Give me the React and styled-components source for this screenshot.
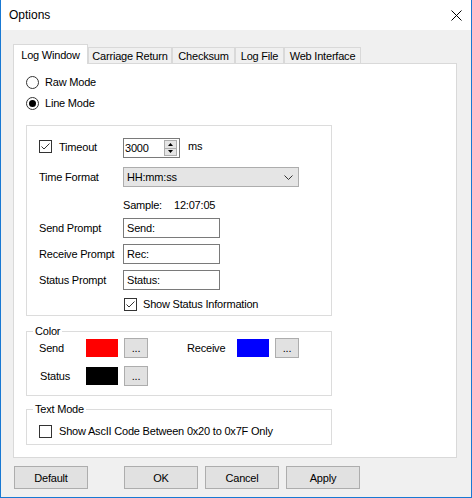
import React from 'react';
import styled, { createGlobalStyle } from 'styled-components';

const Global = createGlobalStyle`
  html, body { margin: 0; padding: 0; background: #f0f0f0; }
  body { font-family: "Liberation Sans", Arial, sans-serif; font-size: 11px; color: #000; letter-spacing: -0.2px; }
  * { box-sizing: border-box; }
`;

const Window = styled.div`
  width: 472px;
  height: 498px;
  background: #f0f0f0;
  border: 1px solid #1979d3;
  border-top: none;
  display: flex;
  flex-direction: column;
`;

const TitleBar = styled.div`
  height: 30px;
  flex-shrink: 0;
  background: #fff;
  display: flex;
  align-items: center;
  justify-content: space-between;
  padding: 0 9px 0 8px;
`;

const Title = styled.span`
  font-size: 12px;
  letter-spacing: 0;
`;

const Body = styled.div`
  padding: 14px 13px 0 12px;
  display: flex;
  flex-direction: column;
`;

const TabStrip = styled.div`
  display: flex;
  align-items: flex-end;
  height: 19px;
`;

const Tab = styled.div`
  width: ${p => p.$w}px;
  height: ${p => (p.$active ? 20 : 16)}px;
  margin-bottom: ${p => (p.$active ? -1 : 0)}px;
  border: 1px solid #d9d9d9;
  border-bottom: none;
  background: ${p => (p.$active ? '#fff' : '#f0f0f0')};
  display: flex;
  align-items: center;
  justify-content: center;
  white-space: nowrap;
  position: relative;
  z-index: ${p => (p.$active ? 1 : 0)};
`;

const Panel = styled.div`
  width: 444px;
  height: 395px;
  background: #fff;
  border: 1px solid #d9d9d9;
  padding: 10px 0 0 12px;
  display: flex;
  flex-direction: column;
`;

const OptionRow = styled.div`
  display: flex;
  align-items: center;
  gap: ${p => p.$gap ?? 6}px;
  height: ${p => p.$h ?? 16}px;
  margin-bottom: ${p => p.$mb ?? 0}px;
  margin-left: ${p => p.$ml ?? 0}px;
  white-space: nowrap;
`;

const Radio = styled.span`
  width: 13px;
  height: 13px;
  border-radius: 50%;
  border: 1px solid #333;
  background: #fff;
  display: flex;
  align-items: center;
  justify-content: center;
  &::after {
    content: '';
    width: 7px;
    height: 7px;
    border-radius: 50%;
    background: ${p => (p.$on ? '#000' : 'transparent')};
  }
`;

const Box = styled.span`
  width: 13px;
  height: 13px;
  border: 1px solid #333;
  background: #fff;
  display: flex;
  align-items: center;
  justify-content: center;
  flex-shrink: 0;
`;

const Check = ({ on }) => (
  <Box>
    {on && (
      <svg width="11" height="11" viewBox="0 0 11 11">
        <polyline points="1.5,5.5 4,8 9.5,2.5" fill="none" stroke="#333" strokeWidth="1" />
      </svg>
    )}
  </Box>
);

const Frame = styled.div`
  width: 306px;
  height: 191px;
  margin-top: 14px;
  border: 1px solid #dcdcdc;
  padding: 12px 0 0 12px;
  display: grid;
  grid-template-columns: 84px 1fr;
  grid-template-rows: 29px 28px 23px 26px 26px 26px 16px;
  align-items: start;
`;

const Cell = styled.div`
  height: ${p => p.$h ?? 20}px;
  display: flex;
  align-items: center;
  gap: ${p => p.$gap ?? 0}px;
  white-space: nowrap;
  padding-left: ${p => p.$pl ?? 0}px;
`;

const Spin = styled.div`
  width: 57px;
  height: 20px;
  border: 1px solid #7a7a7a;
  background: #fff;
  display: flex;
  align-items: center;
  justify-content: space-between;
  padding: 0 2px 0 1px;
`;

const SpinButtons = styled.div`
  width: 13px;
  height: 16px;
  border: 1px solid #adadad;
  background: #e5e5e5;
  display: flex;
  flex-direction: column;
`;

const SpinHalf = styled.div`
  flex: 1;
  display: flex;
  align-items: center;
  justify-content: center;
  border-top: ${p => (p.$lower ? '1px solid #adadad' : 'none')};
`;

const Unit = styled.span`
  padding-bottom: 4px;
`;

const Combo = styled.div`
  width: 176px;
  height: 20px;
  border: 1px solid #adadad;
  background: #e5e5e5;
  display: flex;
  align-items: center;
  justify-content: space-between;
  padding: 0 5px 0 3px;
`;

const TextBox = styled.div`
  width: 97px;
  height: 20px;
  border: 1px solid #7a7a7a;
  background: #fff;
  display: flex;
  align-items: center;
  padding-left: 3px;
`;

const SampleLabel = styled.span`
  width: 51px;
`;

const Group = styled.fieldset`
  width: 306px;
  margin: ${p => p.$mt}px 0 0;
  padding: 0;
  border: 1px solid #dcdcdc;
  min-width: 0;
`;

const Legend = styled.legend`
  margin-left: 6px;
  padding: 0 2px;
  line-height: 13px;
  font-size: 11px;
`;

const GroupBody = styled.div`
  padding: ${p => p.$pt}px 0 ${p => p.$pb}px 12px;
  display: flex;
  flex-direction: column;
  gap: 8px;
`;

const ColorRow = styled.div`
  display: flex;
  align-items: center;
  height: 20px;
`;

const ColorLabel = styled.span`
  width: ${p => p.$w}px;
  margin-left: ${p => p.$ml ?? 0}px;
  padding-left: ${p => p.$pl ?? 0}px;
`;

const Swatch = styled.span`
  width: 32px;
  height: 18px;
  background: ${p => p.$c};
  margin-right: 6px;
`;

const SmallButton = styled.div`
  width: 24px;
  height: 20px;
  border: 1px solid #adadad;
  background: #e1e1e1;
  display: flex;
  align-items: center;
  justify-content: center;
  line-height: 1;
`;

const ButtonRow = styled.div`
  display: flex;
  margin-top: 8px;
  padding-left: 1px;
`;

const Button = styled.div`
  width: 74px;
  height: 23px;
  margin-left: ${p => p.$ml ?? 0}px;
  border: 1px solid #adadad;
  background: #e1e1e1;
  display: flex;
  align-items: center;
  justify-content: center;
`;

const tabs = [
  ['Log Window', 75],
  ['Carriage Return', 84],
  ['Checksum', 63],
  ['Log File', 49],
  ['Web Interface', 77],
];

export default function App() {
  return (
    <>
      <Global />
      <Window>
        <TitleBar>
          <Title>Options</Title>
          <svg width="11" height="11" viewBox="0 0 11 11">
            <path d="M0.5 0.5 L10.5 10.5 M10.5 0.5 L0.5 10.5" stroke="#000" strokeWidth="1" />
          </svg>
        </TitleBar>
        <Body>
          <TabStrip>
            {tabs.map(([t, w], i) => (
              <Tab key={t} $w={w} $active={i === 0}>{t}</Tab>
            ))}
          </TabStrip>
          <Panel>
            <OptionRow $mb={5}>
              <Radio />
              <span>Raw Mode</span>
            </OptionRow>
            <OptionRow>
              <Radio $on />
              <span>Line Mode</span>
            </OptionRow>

            <Frame>
              <Cell $h={17} $gap={7}>
                <Check on />
                <span>Timeout</span>
              </Cell>
              <Cell $gap={8}>
                <Spin>
                  <span>3000</span>
                  <SpinButtons>
                    <SpinHalf>
                      <svg width="5" height="3" viewBox="0 0 5 3"><polygon points="2.5,0 5,3 0,3" fill="#000" /></svg>
                    </SpinHalf>
                    <SpinHalf $lower>
                      <svg width="5" height="3" viewBox="0 0 5 3"><polygon points="0,0 5,0 2.5,3" fill="#000" /></svg>
                    </SpinHalf>
                  </SpinButtons>
                </Spin>
                <Unit>ms</Unit>
              </Cell>

              <Cell>Time Format</Cell>
              <Cell>
                <Combo>
                  <span>HH:mm:ss</span>
                  <svg width="9" height="5" viewBox="0 0 9 5">
                    <polyline points="0.5,0.5 4.5,4.5 8.5,0.5" fill="none" stroke="#333" strokeWidth="1" />
                  </svg>
                </Combo>
              </Cell>

              <Cell />
              <Cell>
                <SampleLabel>Sample:</SampleLabel>
                <span>12:07:05</span>
              </Cell>

              <Cell>Send Prompt</Cell>
              <Cell><TextBox>Send:</TextBox></Cell>

              <Cell>Receive Prompt</Cell>
              <Cell><TextBox>Rec:</TextBox></Cell>

              <Cell>Status Prompt</Cell>
              <Cell><TextBox>Status:</TextBox></Cell>

              <Cell $h={16} />
              <Cell $h={16} $gap={6} $pl={1}>
                <Check on />
                <span>Show Status Information</span>
              </Cell>
            </Frame>

            <Group $mt={9}>
              <Legend>Color</Legend>
              <GroupBody $pt={0} $pb={9}>
                <ColorRow>
                  <ColorLabel $w={47}>Send</ColorLabel>
                  <Swatch $c="#ff0000" />
                  <SmallButton>...</SmallButton>
                  <ColorLabel $w={50} $ml={39}>Receive</ColorLabel>
                  <Swatch $c="#0000ff" />
                  <SmallButton>...</SmallButton>
                </ColorRow>
                <ColorRow>
                  <ColorLabel $w={47} $pl={1}>Status</ColorLabel>
                  <Swatch $c="#000000" />
                  <SmallButton>...</SmallButton>
                </ColorRow>
              </GroupBody>
            </Group>

            <Group $mt={7}>
              <Legend>Text Mode</Legend>
              <GroupBody $pt={7} $pb={5}>
                <OptionRow $gap={7}>
                  <Check />
                  <span>Show AscII Code Between 0x20 to 0x7F Only</span>
                </OptionRow>
              </GroupBody>
            </Group>
          </Panel>
          <ButtonRow>
            <Button>Default</Button>
            <Button $ml={36}>OK</Button>
            <Button $ml={7}>Cancel</Button>
            <Button $ml={7}>Apply</Button>
          </ButtonRow>
        </Body>
      </Window>
    </>
  );
}
